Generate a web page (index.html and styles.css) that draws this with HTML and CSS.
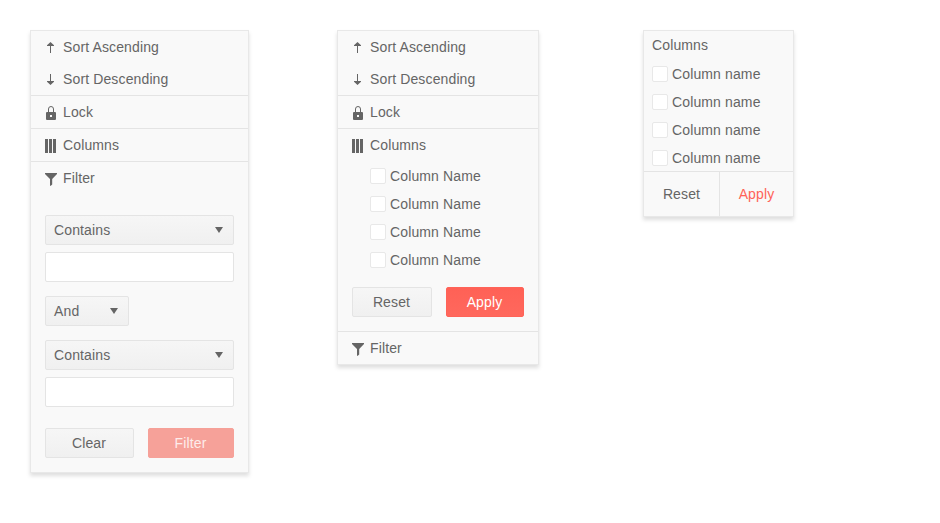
FILE: index.html
```
<!DOCTYPE html>
<html lang="en">
<head>
<meta charset="utf-8">
<title>Column menu</title>
<link rel="stylesheet" href="styles.css">
</head>
<body>
<svg class="defs" width="0" height="0">
  <symbol id="up" viewBox="0 0 16 16"><path d="M7.5 3L11 6.3V7H8v7H7V7H4v-.7z"/></symbol>
  <symbol id="down" viewBox="0 0 16 16"><path d="M7.5 14L11 10.7V10H8V3H7v7H4v.7z"/></symbol>
  <symbol id="lock" viewBox="0 0 16 16"><path fill-rule="evenodd" d="M4 8h8a1 1 0 0 1 1 1v6a1 1 0 0 1-1 1H4a1 1 0 0 1-1-1V9a1 1 0 0 1 1-1zM7 11v2h2v-2z"/><path class="shackle" d="M5.5 8V5a2.5 2.5 0 0 1 5 0v3"/></symbol>
  <symbol id="columns" viewBox="0 0 16 16"><path d="M2 2h3v14H2zM6 2h3v14H6zM10 2h3v14h-3z"/></symbol>
  <symbol id="funnel" viewBox="0 0 16 16"><path d="M2 3h12v1L9.2 9v5.5L7.5 16 7 15.4V9L2 4z"/></symbol>
</svg>
<main class="board">
  <section class="panel filter-menu">
    <div class="item"><svg class="icon"><use href="#up"/></svg>Sort Ascending</div>
    <div class="item"><svg class="icon"><use href="#down"/></svg>Sort Descending</div>
    <div class="item ruled"><svg class="icon"><use href="#lock"/></svg>Lock</div>
    <div class="item ruled"><svg class="icon"><use href="#columns"/></svg>Columns</div>
    <div class="item ruled"><svg class="icon"><use href="#funnel"/></svg>Filter</div>
    <div class="filter-form">
      <div class="select">Contains<svg class="caret" viewBox="0 0 8 6"><path d="M0 0h8L4 6z"/></svg></div>
      <input class="field" type="text">
      <div class="select logic">And<svg class="caret" viewBox="0 0 8 6"><path d="M0 0h8L4 6z"/></svg></div>
      <div class="select">Contains<svg class="caret" viewBox="0 0 8 6"><path d="M0 0h8L4 6z"/></svg></div>
      <input class="field" type="text">
      <div class="actions"><button class="button clear">Clear</button><button class="button primary disabled">Filter</button></div>
    </div>
  </section>
  <section class="panel column-menu">
    <div class="item"><svg class="icon"><use href="#up"/></svg>Sort Ascending</div>
    <div class="item"><svg class="icon"><use href="#down"/></svg>Sort Descending</div>
    <div class="item ruled"><svg class="icon"><use href="#lock"/></svg>Lock</div>
    <div class="item ruled"><svg class="icon"><use href="#columns"/></svg>Columns</div>
    <div class="checks nested">
      <label class="check"><span class="box"></span>Column Name</label>
      <label class="check"><span class="box"></span>Column Name</label>
      <label class="check"><span class="box"></span>Column Name</label>
      <label class="check"><span class="box"></span>Column Name</label>
    </div>
    <div class="actions column-actions"><button class="button reset">Reset</button><button class="button primary">Apply</button></div>
    <div class="item ruled"><svg class="icon"><use href="#funnel"/></svg>Filter</div>
  </section>
  <section class="panel chooser">
    <div class="heading">Columns</div>
    <div class="checks">
      <label class="check"><span class="box"></span>Column name</label>
      <label class="check"><span class="box"></span>Column name</label>
      <label class="check"><span class="box"></span>Column name</label>
      <label class="check"><span class="box"></span>Column name</label>
    </div>
    <div class="footer"><button class="flat">Reset</button><button class="flat accent">Apply</button></div>
  </section>
</main>
</body>
</html>
```
FILE: styles.css
```
* { box-sizing: border-box; }
body {
  margin: 0;
  background: #fff;
  color: #656565;
  font: 14px/20px "Liberation Sans", Arial, sans-serif;
  letter-spacing: .13px;
}
.defs { display: block; }
.board { display: flex; align-items: flex-start; padding: 30px; }
.panel {
  flex: none;
  border: 1px solid #e8e8e8;
  background: #f9f9f9;
  box-shadow: 0 3px 4px rgba(0, 0, 0, .13);
}
.filter-menu { width: 219px; }
.column-menu { width: 202px; margin-left: 88px; }
.chooser { width: 151px; margin-left: 104px; }
.item { display: flex; align-items: center; height: 32px; padding-left: 12px; }
.ruled { height: 33px; border-top: 1px solid #e4e4e4; }
.icon { width: 16px; height: 16px; margin-right: 4px; fill: #656565; }
.shackle { fill: none; stroke: #656565; stroke-width: 1; }
.filter-form { display: flex; flex-direction: column; padding: 21px 14px 14px; }
.select {
  display: flex;
  align-items: center;
  justify-content: space-between;
  height: 30px;
  padding: 0 10px 0 8px;
  border: 1px solid #e4e4e4;
  border-radius: 2px;
  background: linear-gradient(#f6f6f6, #f0f0f0);
}
.caret { width: 8px; height: 6px; fill: #656565; }
.field { width: 100%; height: 30px; margin: 7px 0 14px; border: 1px solid #e4e4e4; border-radius: 2px; background: #fff; }
.logic { width: 84px; margin-bottom: 14px; }
.actions { display: flex; gap: 14px; margin-top: 7px; }
.button {
  flex: 1;
  height: 30px;
  padding: 0 1px 0 0;
  border: 1px solid #e4e4e4;
  border-radius: 2px;
  background: linear-gradient(#f6f6f6, #f0f0f0);
  color: inherit;
  font: inherit;
  letter-spacing: inherit;
}
.clear { flex: 0 0 89px; }
.reset { flex: 0 0 80px; }
.primary { border-color: #ff6358; background: linear-gradient(#ff6156, #ff685d); color: #fff; }
.disabled { border-color: #f6a199; background: #f6a199; color: #fdeceb; }
.column-actions { margin: 0; padding: 13px 14px 14px; }
.check { display: flex; align-items: center; height: 28px; padding-left: 8px; }
.nested { padding-top: 1px; }
.nested .check { padding-left: 32px; }
.box { width: 16px; height: 16px; margin-right: 4px; border: 1px solid #e8e8e8; border-radius: 2px; background: #fff; }
.heading { height: 29px; padding: 4px 8px; }
.footer { display: flex; height: 45px; margin-top: -1px; border-top: 1px solid #e4e4e4; }
.flat { flex: 1; padding: 0; border: 0; background: none; color: inherit; font: inherit; letter-spacing: inherit; }
.flat:first-child { flex: 0 0 76px; border-right: 1px solid #e4e4e4; }
.flat.accent { color: #ff6358; }
```
